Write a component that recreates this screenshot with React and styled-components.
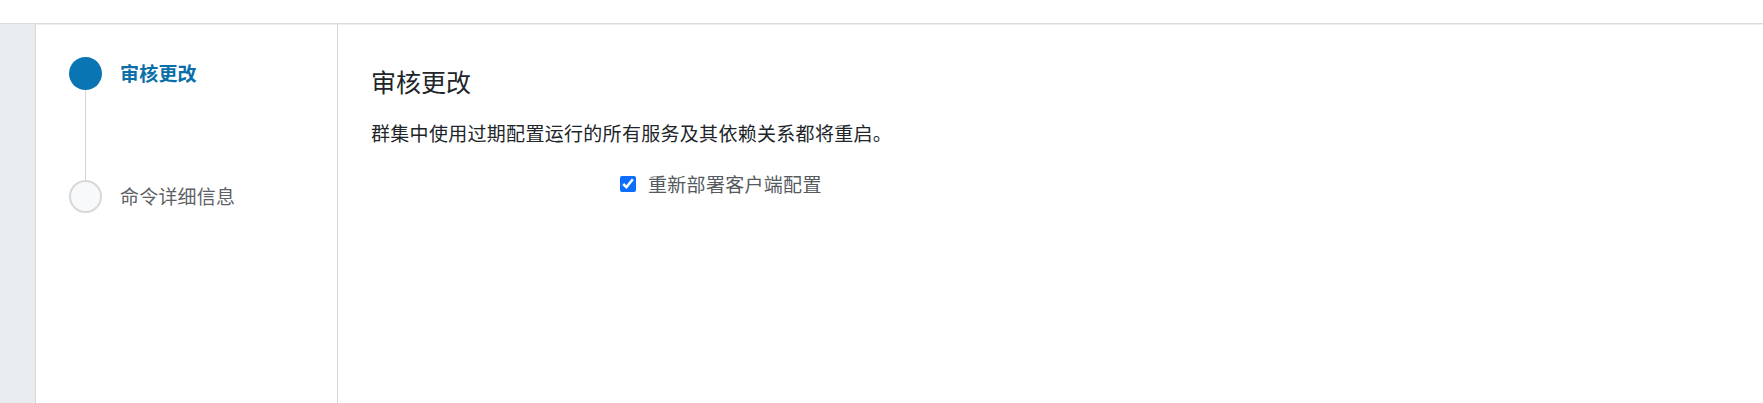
import React from 'react';
import styled, { createGlobalStyle } from 'styled-components';

const GlobalStyle = createGlobalStyle`
  html, body {
    margin: 0;
    padding: 0;
    background: #fff;
  }
  body {
    font-family: "Noto Sans CJK SC", "Noto Sans", sans-serif;
    color: #212529;
  }
`;

const Page = styled.div`
  display: flex;
  flex-direction: column;
  height: 100vh;
  overflow: hidden;
`;

const TopBar = styled.div`
  height: 23px;
  flex-shrink: 0;
  background: #fff;
  border-bottom: 1px solid #dcdcde;
  box-shadow: 0 1px 0 #eeeeef;
`;

const Body = styled.div`
  display: flex;
  flex: 1;
  min-height: 0;
`;

const Strip = styled.div`
  width: 35px;
  flex-shrink: 0;
  background: #e9ecef;
  border-right: 1px solid #d6d7d9;
`;

const Sidebar = styled.div`
  width: 302px;
  flex-shrink: 0;
  padding: 33px 0 0 33px;
  box-sizing: border-box;
  border-right: 1px solid #d6d7d9;
`;

const Step = styled.div`
  display: flex;
  gap: 18px;
`;

const Marker = styled.div`
  display: flex;
  flex-direction: column;
  align-items: center;
  width: 33px;
`;

const Dot = styled.div`
  width: 33px;
  height: 33px;
  box-sizing: border-box;
  border-radius: 50%;
  background: ${p => (p.active ? '#0a75b3' : '#f8f9fb')};
  border: ${p => (p.active ? 'none' : '2px solid #d7d8da')};
`;

const Line = styled.div`
  width: 1px;
  height: 90px;
  background: #d3d4d6;
`;

const StepLabel = styled.div`
  font-size: 19px;
  line-height: 31px;
  letter-spacing: 0.2px;
  font-weight: ${p => (p.active ? 700 : 400)};
  color: ${p => (p.active ? '#0a6ea8' : '#5d6166')};
  white-space: nowrap;
`;

const Content = styled.div`
  flex: 1;
  padding: 42px 33px;
`;

const Title = styled.h2`
  margin: 0;
  font-size: 25px;
  line-height: 30px;
  font-weight: 400;
  color: #212529;
`;

const Desc = styled.p`
  margin: 23px 0 0;
  font-size: 19px;
  line-height: 28px;
  letter-spacing: 0.3px;
  color: #212529;
`;

const CheckRow = styled.label`
  display: flex;
  align-items: center;
  gap: 12px;
  margin: 23px 0 0 249px;
  font-size: 19px;
  line-height: 28px;
  letter-spacing: 0.3px;
  color: #555a60;
`;

const Check = styled.input`
  width: 16px;
  height: 16px;
  margin: 0;
  accent-color: #0d6efd;
`;

const steps = [
  { label: '审核更改', active: true },
  { label: '命令详细信息', active: false }
];

export default function App() {
  return (
    <Page>
      <GlobalStyle />
      <TopBar />
      <Body>
        <Strip />
        <Sidebar>
          {steps.map((s, i) => (
            <Step key={s.label}>
              <Marker>
                <Dot active={s.active} />
                {i < steps.length - 1 && <Line />}
              </Marker>
              <StepLabel active={s.active}>{s.label}</StepLabel>
            </Step>
          ))}
        </Sidebar>
        <Content>
          <Title>审核更改</Title>
          <Desc>群集中使用过期配置运行的所有服务及其依赖关系都将重启。</Desc>
          <CheckRow>
            <Check type="checkbox" defaultChecked />
            重新部署客户端配置
          </CheckRow>
        </Content>
      </Body>
    </Page>
  );
}
